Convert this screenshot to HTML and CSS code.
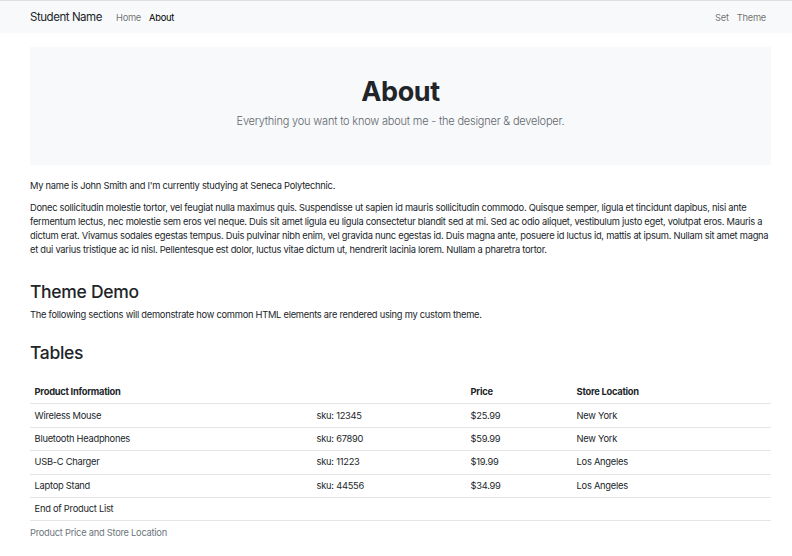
FILE: index.html
```html
<!DOCTYPE html>
<html lang="en">
<head>
<meta charset="utf-8">
<title>About</title>
<link rel="stylesheet" href="styles.css">
</head>
<body>
<nav class="navbar">
  <div class="nav-left">
    <a class="brand" href="#">Student Name</a>
    <a class="nav-link" href="#">Home</a>
    <a class="nav-link active" href="#">About</a>
  </div>
  <div class="nav-right">
    <a class="nav-link" href="#">Set</a>
    <a class="nav-link" href="#">Theme</a>
  </div>
</nav>
<main class="container">
  <section class="hero">
    <h1 class="hero-title">About</h1>
    <p class="lead">Everything you want to know about me - the designer &amp; developer.</p>
  </section>
  <p>My name is John Smith and I'm currently studying at Seneca Polytechnic.</p>
  <p>Donec sollicitudin molestie tortor, vel feugiat nulla maximus quis. Suspendisse ut sapien id mauris sollicitudin commodo. Quisque semper, ligula et tincidunt dapibus, nisi ante fermentum lectus, nec molestie sem eros vel neque. Duis sit amet ligula eu ligula consectetur blandit sed at mi. Sed ac odio aliquet, vestibulum justo eget, volutpat eros. Mauris a dictum erat. Vivamus sodales egestas tempus. Duis pulvinar nibh enim, vel gravida nunc egestas id. Duis magna ante, posuere id luctus id, mattis at ipsum. Nullam sit amet magna et dui varius tristique ac id nisl. Pellentesque est dolor, luctus vitae dictum ut, hendrerit lacinia lorem. Nullam a pharetra tortor.</p>
  <h2 class="section-title demo">Theme Demo</h2>
  <p>The following sections will demonstrate how common HTML elements are rendered using my custom theme.</p>
  <h2 class="section-title tables">Tables</h2>
  <table class="table">
    <thead>
      <tr><th class="c1">Product Information</th><th class="c2"></th><th class="c3">Price</th><th class="c4">Store Location</th></tr>
    </thead>
    <tbody>
      <tr><td>Wireless Mouse</td><td>sku: 12345</td><td>$25.99</td><td>New York</td></tr>
      <tr><td>Bluetooth Headphones</td><td>sku: 67890</td><td>$59.99</td><td>New York</td></tr>
      <tr><td>USB-C Charger</td><td>sku: 11223</td><td>$19.99</td><td>Los Angeles</td></tr>
      <tr><td>Laptop Stand</td><td>sku: 44556</td><td>$34.99</td><td>Los Angeles</td></tr>
      <tr><td>End of Product List</td><td></td><td></td><td></td></tr>
    </tbody>
    <caption>Product Price and Store Location</caption>
  </table>
</main>
</body>
</html>
```

FILE: styles.css
```css
* { box-sizing: border-box; }
html, body { margin: 0; padding: 0; }
body {
  font-family: Inter, "Liberation Sans", sans-serif;
  font-size: 9.3px;
  letter-spacing: -0.25px;
  line-height: 13.9px;
  color: #212529;
  background: #fff;
}
a { text-decoration: none; }
.navbar {
  display: flex;
  justify-content: space-between;
  align-items: center;
  height: 33px;
  padding: 1px 22px 0 30px;
  background: #f8f9fa;
  border-top: 1px solid #dedfe0;
}
.nav-left, .nav-right { display: flex; align-items: center; }
.brand {
  font-size: 11.5px;
  letter-spacing: -0.45px;
  color: #212529;
  margin-right: 10px;
}
.nav-link {
  color: rgba(0,0,0,0.58);
  padding: 0 4px;
}
.nav-link.active { color: #000; }
.container {
  padding: 14px 21px 0 30px;
}
.hero {
  background: #f8f9fa;
  height: 118px;
  padding-bottom: 6px;
  display: flex;
  flex-direction: column;
  align-items: center;
  justify-content: center;
  margin-bottom: 14px;
}
.hero-title {
  font-size: 27px;
  font-weight: 700;
  letter-spacing: -0.4px;
  line-height: 32.4px;
  margin: 0 0 4.5px;
}
.lead {
  font-size: 11px;
  font-weight: 300;
  letter-spacing: -0.2px;
  color: #5f666d;
  line-height: 16.5px;
  margin: 0;
}
p { margin: 0 0 8.5px; }
.section-title {
  font-size: 17.5px;
  font-weight: 500;
  letter-spacing: -0.3px;
  line-height: 21px;
  margin: 24px 0 6px;
}
.section-title.tables { margin-top: 20.5px; }
.table {
  width: 100%;
  border-collapse: collapse;
  caption-side: bottom;
  margin-top: 17.5px;
}
.table th, .table td {
  text-align: left;
  padding: 4.25px 4.6px;
  border-bottom: 1px solid #e3e6e9;
  line-height: 13.9px;
}
.table th { font-weight: 700; }
.c1 { width: 282px; }
.c2 { width: 154px; }
.c3 { width: 106px; }
caption {
  text-align: left;
  color: #6c757d;
  padding: 4.3px 0;
}
```
